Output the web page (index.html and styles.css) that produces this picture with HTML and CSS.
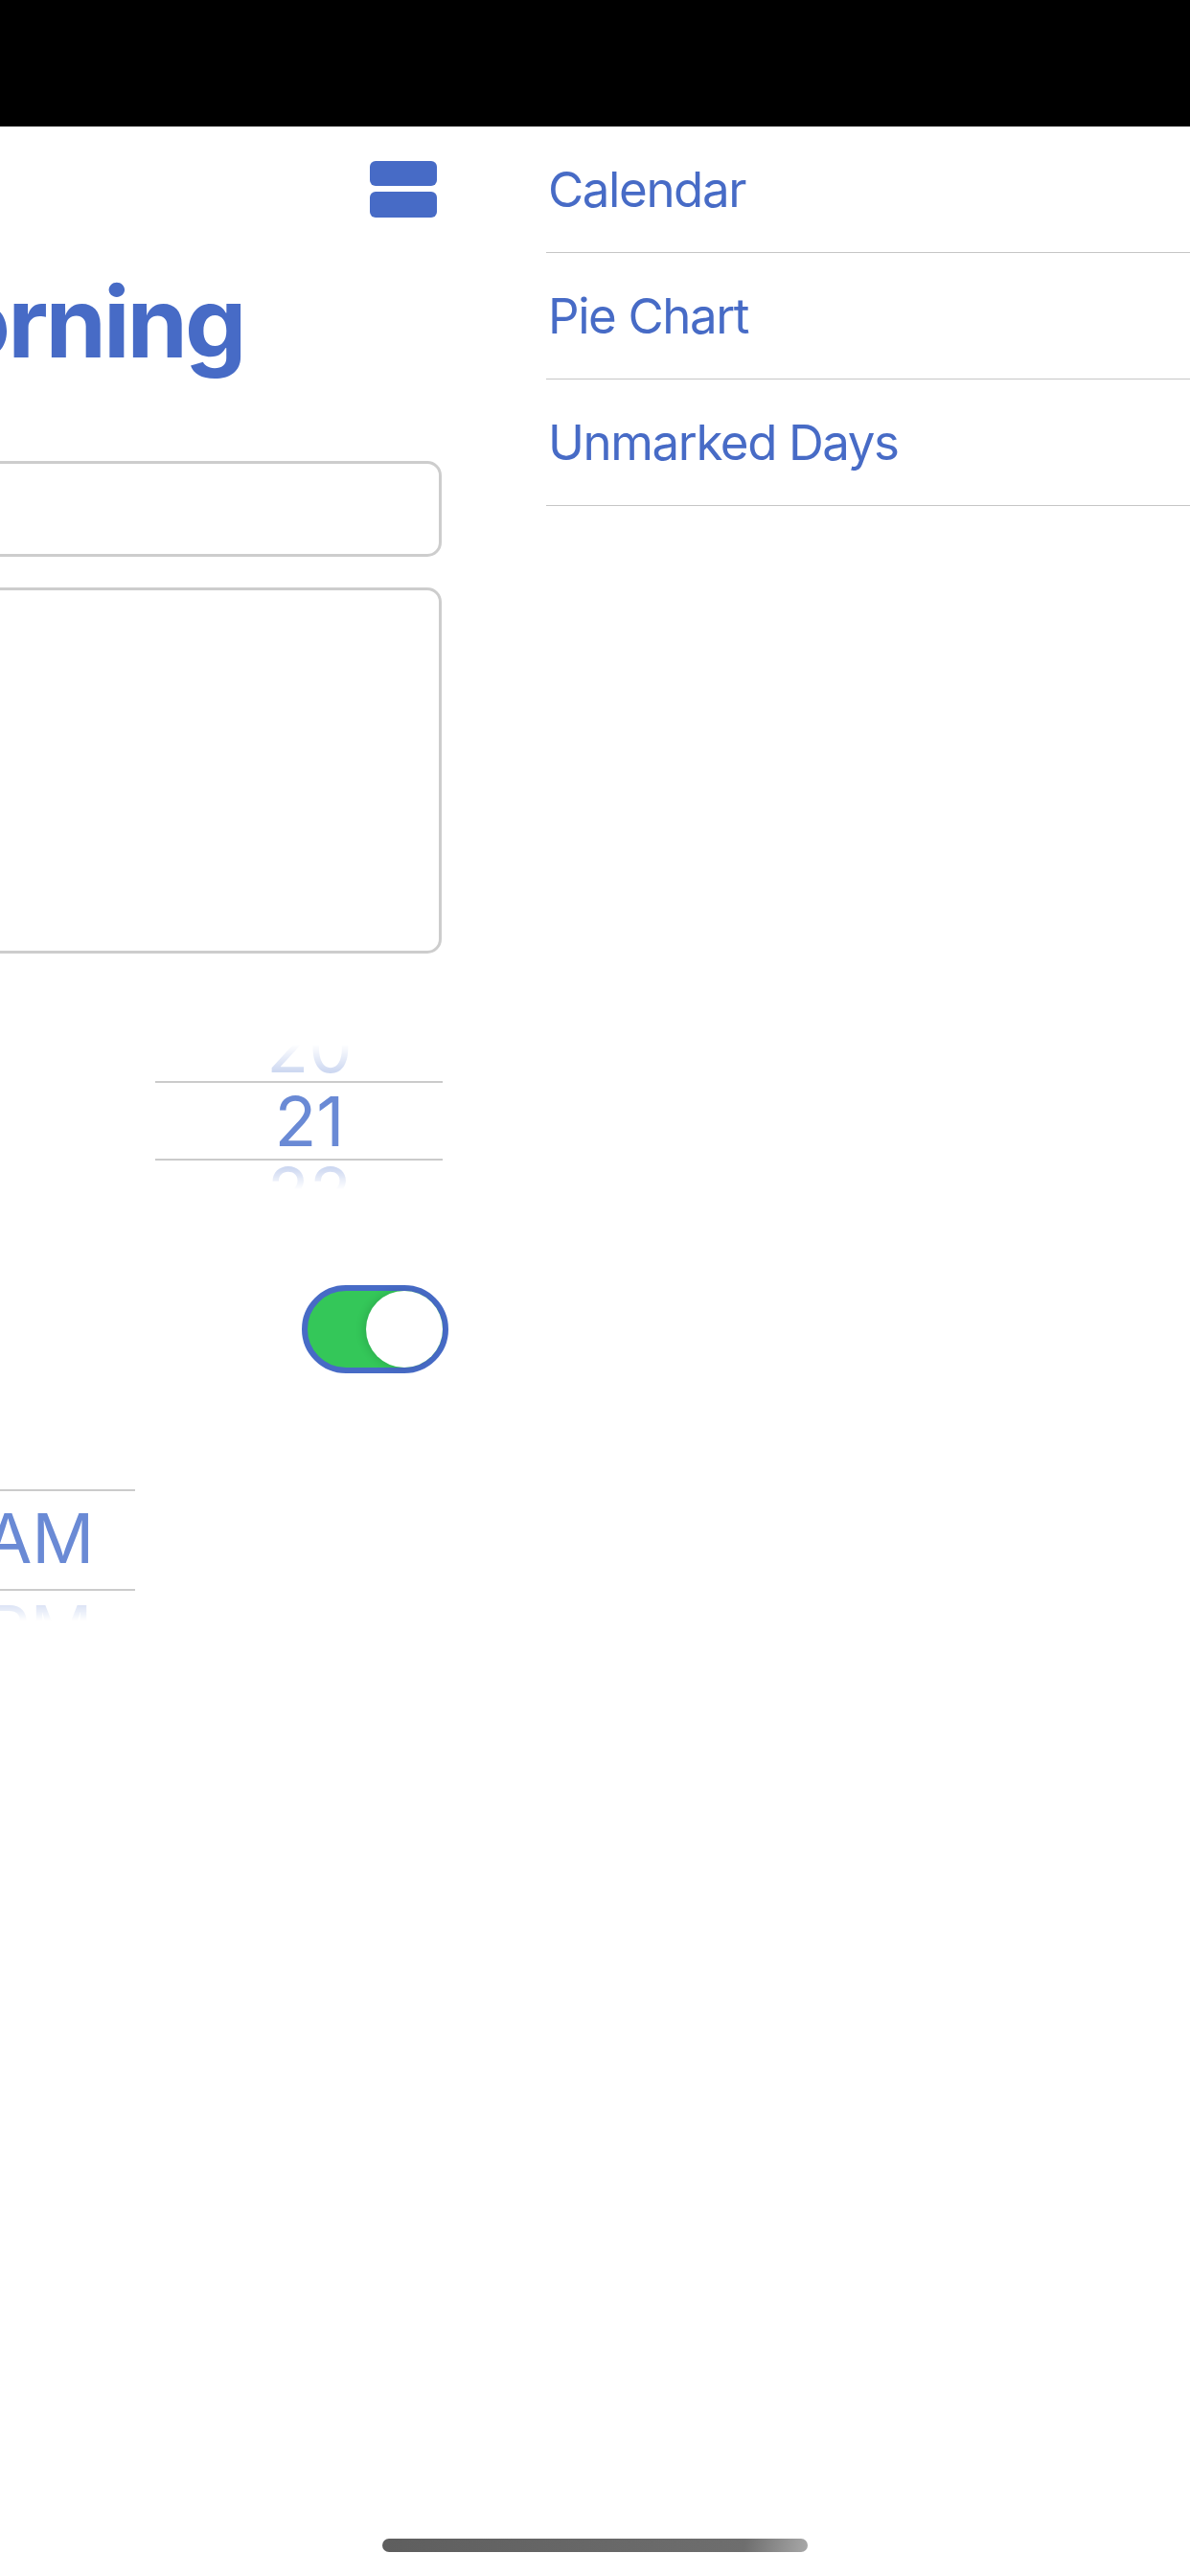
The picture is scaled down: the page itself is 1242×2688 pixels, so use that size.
FILE: index.html
```html
<!DOCTYPE html>
<html lang="en">
<head>
    <meta charset="UTF-8">
    <meta name="viewport" content="width=device-width, initial-scale=1.0">
    <title>Good Morning</title>
    <link rel="stylesheet" href="styles.css">
</head>
<body>
    <div class="screen">
        <div class="status-bar"></div>

        <div class="panes">
            <main class="main">
                <div class="topbar">
                    <button class="menu-button" aria-label="Menu">
                        <svg width="70" height="59" viewBox="0 0 70 59">
                            <rect x="0" y="0" width="70" height="26" rx="6" fill="#476bc6"/>
                            <rect x="0" y="32" width="70" height="27" rx="6" fill="#476bc6"/>
                        </svg>
                    </button>
                </div>

                <h1 class="title">Good Morning</h1>

                <input class="field" type="text">
                <textarea class="field field-notes"></textarea>

                <div class="wheel-row">
                    <div class="wheel wheel-hours">
                        <div class="wheel-item prev">20</div>
                        <div class="wheel-item current">21</div>
                        <div class="wheel-item next">22</div>
                    </div>
                </div>

                <div class="setting-row">
                    <div class="switch" role="switch" aria-checked="true">
                        <div class="switch-knob"></div>
                    </div>
                </div>

                <div class="wheel wheel-ampm">
                    <div class="wheel-item prev"></div>
                    <div class="wheel-item current">AM</div>
                    <div class="wheel-item next">PM</div>
                </div>
            </main>

            <nav class="drawer">
                <a class="drawer-item" href="#">Calendar</a>
                <a class="drawer-item" href="#">Pie Chart</a>
                <a class="drawer-item" href="#">Unmarked Days</a>
            </nav>
        </div>

        <div class="home-area">
            <div class="home-indicator"></div>
        </div>
    </div>
</body>
</html>
```

FILE: styles.css
```css
html, body {
    margin: 0;
    padding: 0;
    overflow: hidden;
    background: #fff;
}
body {
    font-family: Inter, "Noto Sans", sans-serif;
}
.screen {
    width: 1242px;
    height: 2688px;
    display: flex;
    flex-direction: column;
}
.status-bar {
    height: 132px;
    background: #000;
    flex-shrink: 0;
}
.panes {
    flex: 1;
    display: flex;
    overflow: hidden;
}

/* main screen, pushed left by the open drawer */
.main {
    width: 1242px;
    flex-shrink: 0;
    margin-left: -721px;
    padding: 0 60px;
    box-sizing: border-box;
    display: flex;
    flex-direction: column;
}
.topbar {
    display: flex;
    justify-content: flex-end;
    padding-top: 36px;
}
.menu-button {
    border: none;
    background: none;
    padding: 0;
    margin-right: 5px;
    display: block;
    height: 59px;
}
.menu-button svg {
    display: block;
}
.title {
    margin: 49px 0 0;
    padding-left: 36px;
    font-size: 102px;
    line-height: 120px;
    font-weight: 700;
    letter-spacing: -3px;
    color: #476bc6;
    text-align: center;
}
.field {
    display: block;
    width: 100%;
    height: 100px;
    margin: 85px 0 0;
    border: 3px solid #cdcdcd;
    border-radius: 15px;
    box-sizing: border-box;
    font: inherit;
    resize: none;
    outline: none;
}
.field-notes {
    height: 382px;
    margin-top: 32px;
}

/* pickers */
.wheel-row {
    display: flex;
    justify-content: flex-end;
    margin-top: 93px;
    margin-right: -1px;
}
.wheel {
    font-size: 72px;
    color: #6a8ad5;
    text-align: center;
}
.wheel-item {
    overflow: hidden;
    box-sizing: border-box;
}
.wheel-item.prev {
    height: 40px;
    display: flex;
    align-items: flex-end;
    justify-content: center;
    line-height: 70px;
    -webkit-mask-image: linear-gradient(to bottom, transparent 5%, rgba(0, 0, 0, 0.45) 100%);
    mask-image: linear-gradient(to bottom, transparent 5%, rgba(0, 0, 0, 0.45) 100%);
}
.wheel-item.current {
    border-top: 2px solid #cbcbcb;
    border-bottom: 2px solid #cbcbcb;
}
.wheel-item.next {
    height: 40px;
    -webkit-mask-image: linear-gradient(to bottom, rgba(0, 0, 0, 0.45) 0%, transparent 75%);
    mask-image: linear-gradient(to bottom, rgba(0, 0, 0, 0.45) 0%, transparent 75%);
}
.wheel-hours {
    width: 300px;
}
.wheel-hours .wheel-item {
    padding-left: 22px;
}
.wheel-hours .current {
    height: 83px;
    line-height: 79px;
}
.wheel-hours .next {
    line-height: 66px;
}
.wheel-ampm {
    width: 200px;
    margin: 81px 0 0 602px;
}
.wheel-ampm .current {
    height: 106px;
    line-height: 98px;
}
.wheel-ampm .next {
    height: 42px;
    line-height: 82px;
}

/* switch */
.setting-row {
    display: flex;
    justify-content: flex-end;
    margin-top: 90px;
}
.switch {
    width: 153px;
    height: 92px;
    margin-right: -7px;
    border: 6px solid #476bc6;
    border-radius: 46px;
    background: #34c759;
    box-sizing: border-box;
    display: flex;
    justify-content: flex-end;
}
.switch-knob {
    width: 80px;
    height: 80px;
    border-radius: 50%;
    background: #fff;
    box-shadow: -3px 0 8px rgba(0, 0, 0, 0.12);
}

/* drawer */
.drawer {
    width: 721px;
    flex-shrink: 0;
    padding-left: 49px;
    box-sizing: border-box;
    display: flex;
    flex-direction: column;
}
.drawer-item {
    height: 132px;
    display: flex;
    align-items: center;
    padding-left: 2px;
    border-bottom: 1px solid #c6c6c6;
    box-sizing: border-box;
    font-size: 51px;
    letter-spacing: -1.4px;
    color: #476bc6;
    text-decoration: none;
}

.home-area {
    height: 39px;
    flex-shrink: 0;
    display: flex;
    justify-content: center;
}
.home-indicator {
    width: 444px;
    height: 14px;
    border-radius: 7px;
    background: linear-gradient(100deg, #5e5e5e 0%, #6e6e6e 85%, #a8a8a8 100%);
}
```
